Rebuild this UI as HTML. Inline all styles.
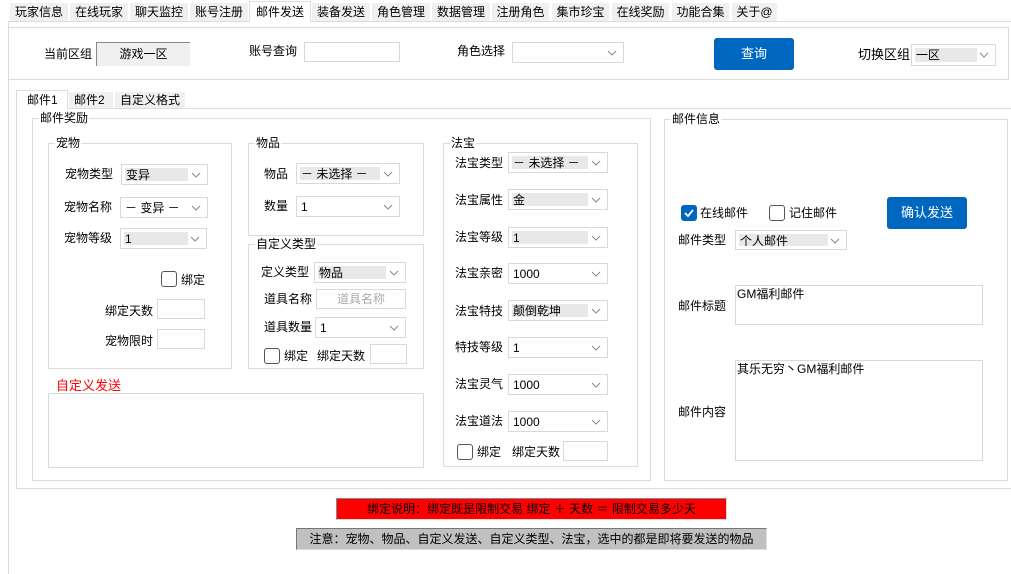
<!DOCTYPE html>
<html><head><meta charset="utf-8">
<style>
*{box-sizing:border-box;margin:0;padding:0}
body{width:1011px;height:574px;background:#fff;position:relative;overflow:hidden;font-family:"Liberation Sans","Noto Sans CJK SC",sans-serif;font-size:12px;color:#000}
.a{position:absolute}
.t{position:absolute;line-height:14px;white-space:nowrap}
.tab{position:absolute;top:3px;height:18px;background:#f0f0f0;text-align:center;line-height:18px;font-size:12px}
.bx{position:absolute;border:1px solid #dcdcdc}
.gl{position:absolute;background:#fff;padding:0 1px;line-height:14px;top:-8px;left:6px;white-space:nowrap}
.s{position:absolute;border:1px solid #d9d9d9;background:#fff;height:21px}
.s .f{position:absolute;left:3px;top:3px;bottom:3px;background:#e8e8e8}
.s .v{position:absolute;left:4px;top:3px;line-height:14px;white-space:nowrap}
.s svg{position:absolute;right:6px;top:7px}
.in{position:absolute;border:1px solid #d9d9d9;background:#fff}
.cb{position:absolute;width:16px;height:16px;border:1px solid #333;border-radius:3px;background:#fff}
</style></head><body>
<!-- top tabs -->
<div class="a" style="left:8px;top:21px;width:1003px;height:1px;background:#dcdcdc"></div>
<div class="tab" style="left:10px;width:58px">玩家信息</div>
<div class="tab" style="left:70px;width:58px">在线玩家</div>
<div class="tab" style="left:130px;width:58px">聊天监控</div>
<div class="tab" style="left:190px;width:58px">账号注册</div>
<div class="tab" style="left:249px;top:1px;height:21px;width:62px;background:#fff;border:1px solid #dcdcdc;border-bottom:none;line-height:20px">邮件发送</div>
<div class="tab" style="left:312px;width:58px">装备发送</div>
<div class="tab" style="left:372px;width:58px">角色管理</div>
<div class="tab" style="left:432px;width:58px">数据管理</div>
<div class="tab" style="left:492px;width:57px">注册角色</div>
<div class="tab" style="left:552px;width:57px">集市珍宝</div>
<div class="tab" style="left:612px;width:57px">在线奖励</div>
<div class="tab" style="left:672px;width:57px">功能合集</div>
<div class="tab" style="left:732px;width:45px">关于@</div>
<div class="a" style="left:8px;top:22px;width:1px;height:552px;background:#dcdcdc"></div>
<!-- top panel -->
<div class="bx" style="left:8px;top:27px;width:1001px;height:53px;border-left:none"></div>
<div class="t" style="left:44px;top:47px">当前区组</div>
<div class="a" style="left:96px;top:42px;width:94px;height:24px;background:#f0f0f0;border-left:1px solid #888;border-top:1px solid #888;text-align:center;line-height:22px">游戏一区</div>
<div class="t" style="left:249px;top:44px">账号查询</div>
<div class="in" style="left:304px;top:42px;width:96px;height:20px"></div>
<div class="t" style="left:457px;top:44px">角色选择</div>
<div class="s" style="left:512px;top:42px;width:112px;height:21px"><svg width="10" height="6"><path d="M1 1L5 5L9 1" fill="none" stroke="#888"/></svg></div>
<div class="a" style="left:714px;top:38px;width:80px;height:32px;background:#0067c0;border-radius:3px;color:#fff;text-align:center;line-height:32px;font-size:13px">查询</div>
<div class="t" style="left:858px;top:48px;font-size:13px">切换区组</div>
<div class="s" style="left:911px;top:44px;width:85px;height:22px"><div class="f" style="width:62px"></div><div class="v" style="left:4px;top:3px">一区</div><svg width="10" height="6"><path d="M1 1L5 5L9 1" fill="none" stroke="#888"/></svg></div>
<!-- sub tabs -->
<div class="a" style="left:16px;top:108px;width:995px;height:1px;background:#dcdcdc"></div>
<div class="a" style="left:16px;top:90px;width:52px;height:19px;background:#fff;border:1px solid #dcdcdc;border-bottom:none;line-height:18px;padding-left:10px">邮件1</div>
<div class="a" style="left:69px;top:92px;width:44px;height:16px;background:#f0f0f0;line-height:16px;padding-left:5px">邮件2</div>
<div class="a" style="left:115px;top:92px;width:70px;height:16px;background:#f0f0f0;line-height:16px;padding-left:5px">自定义格式</div>
<div class="bx" style="left:16px;top:108px;width:1000px;height:381px;border-top:none"></div>
<!-- 邮件奖励 -->
<div class="bx" style="left:32px;top:118px;width:619px;height:363px"><div class="gl">邮件奖励</div></div>
<!-- 宠物 -->
<div class="bx" style="left:48px;top:143px;width:184px;height:226px"><div class="gl">宠物</div></div>
<div class="t" style="left:65px;top:167px">宠物类型</div>
<div class="s" style="left:121px;top:164px;width:87px"><div class="f" style="width:63px"></div><div class="v">变异</div><svg width="10" height="6"><path d="M1 1L5 5L9 1" fill="none" stroke="#888"/></svg></div>
<div class="t" style="left:64px;top:200px">宠物名称</div>
<div class="s" style="left:120px;top:197px;width:88px"><div class="v">－ 变异 －</div><svg width="10" height="6"><path d="M1 1L5 5L9 1" fill="none" stroke="#888"/></svg></div>
<div class="t" style="left:64px;top:231px">宠物等级</div>
<div class="s" style="left:120px;top:228px;width:87px"><div class="f" style="width:64px"></div><div class="v">1</div><svg width="10" height="6"><path d="M1 1L5 5L9 1" fill="none" stroke="#888"/></svg></div>
<div class="cb" style="left:161px;top:271px;border-color:#555"></div>
<div class="t" style="left:181px;top:273px">绑定</div>
<div class="t" style="left:105px;top:304px">绑定天数</div>
<div class="in" style="left:157px;top:299px;width:48px;height:20px"></div>
<div class="t" style="left:105px;top:334px">宠物限时</div>
<div class="in" style="left:157px;top:329px;width:48px;height:20px"></div>
<!-- 物品 -->
<div class="bx" style="left:248px;top:143px;width:176px;height:93px"><div class="gl">物品</div></div>
<div class="t" style="left:264px;top:167px">物品</div>
<div class="s" style="left:296px;top:163px;width:104px"><div class="f" style="width:80px"></div><div class="v">－ 未选择 －</div><svg width="10" height="6"><path d="M1 1L5 5L9 1" fill="none" stroke="#888"/></svg></div>
<div class="t" style="left:264px;top:199px">数量</div>
<div class="s" style="left:296px;top:196px;width:104px"><div class="v">1</div><svg width="10" height="6"><path d="M1 1L5 5L9 1" fill="none" stroke="#888"/></svg></div>
<!-- 自定义类型 -->
<div class="bx" style="left:248px;top:244px;width:176px;height:125px"><div class="gl">自定义类型</div></div>
<div class="t" style="left:261px;top:265px">定义类型</div>
<div class="s" style="left:314px;top:262px;width:92px"><div class="f" style="width:68px"></div><div class="v">物品</div><svg width="10" height="6"><path d="M1 1L5 5L9 1" fill="none" stroke="#888"/></svg></div>
<div class="t" style="left:264px;top:292px">道具名称</div>
<div class="in" style="left:316px;top:289px;width:90px;height:20px;color:#aaa;text-align:center;line-height:18px">道具名称</div>
<div class="t" style="left:264px;top:320px">道具数量</div>
<div class="s" style="left:315px;top:317px;width:91px"><div class="v">1</div><svg width="10" height="6"><path d="M1 1L5 5L9 1" fill="none" stroke="#888"/></svg></div>
<div class="cb" style="left:264px;top:348px;border-color:#555"></div>
<div class="t" style="left:284px;top:349px">绑定</div>
<div class="t" style="left:317px;top:349px">绑定天数</div>
<div class="in" style="left:370px;top:344px;width:37px;height:20px"></div>
<!-- 自定义发送 -->
<div class="t" style="left:56px;top:379px;color:#f00;font-size:13px">自定义发送</div>
<div class="in" style="left:48px;top:393px;width:376px;height:75px"></div>
<!-- 法宝 -->
<div class="bx" style="left:443px;top:143px;width:195px;height:324px"><div class="gl">法宝</div></div>
<div class="t" style="left:455px;top:156px">法宝类型</div>
<div class="s" style="left:508px;top:152px;width:100px"><div class="f" style="width:76px"></div><div class="v">－ 未选择 －</div><svg width="10" height="6"><path d="M1 1L5 5L9 1" fill="none" stroke="#888"/></svg></div>
<div class="t" style="left:455px;top:193px">法宝属性</div>
<div class="s" style="left:508px;top:189px;width:100px"><div class="f" style="width:76px"></div><div class="v">金</div><svg width="10" height="6"><path d="M1 1L5 5L9 1" fill="none" stroke="#888"/></svg></div>
<div class="t" style="left:455px;top:230px">法宝等级</div>
<div class="s" style="left:508px;top:227px;width:100px"><div class="f" style="width:76px"></div><div class="v">1</div><svg width="10" height="6"><path d="M1 1L5 5L9 1" fill="none" stroke="#888"/></svg></div>
<div class="t" style="left:455px;top:266px">法宝亲密</div>
<div class="s" style="left:508px;top:263px;width:100px"><div class="v">1000</div><svg width="10" height="6"><path d="M1 1L5 5L9 1" fill="none" stroke="#888"/></svg></div>
<div class="t" style="left:455px;top:304px">法宝特技</div>
<div class="s" style="left:508px;top:300px;width:100px"><div class="f" style="width:76px"></div><div class="v">颠倒乾坤</div><svg width="10" height="6"><path d="M1 1L5 5L9 1" fill="none" stroke="#888"/></svg></div>
<div class="t" style="left:455px;top:340px">特技等级</div>
<div class="s" style="left:508px;top:337px;width:100px"><div class="v">1</div><svg width="10" height="6"><path d="M1 1L5 5L9 1" fill="none" stroke="#888"/></svg></div>
<div class="t" style="left:455px;top:377px">法宝灵气</div>
<div class="s" style="left:508px;top:374px;width:100px"><div class="v">1000</div><svg width="10" height="6"><path d="M1 1L5 5L9 1" fill="none" stroke="#888"/></svg></div>
<div class="t" style="left:455px;top:414px">法宝道法</div>
<div class="s" style="left:508px;top:411px;width:100px"><div class="v">1000</div><svg width="10" height="6"><path d="M1 1L5 5L9 1" fill="none" stroke="#888"/></svg></div>
<div class="cb" style="left:457px;top:444px;border-color:#555"></div>
<div class="t" style="left:477px;top:445px">绑定</div>
<div class="t" style="left:512px;top:445px">绑定天数</div>
<div class="in" style="left:563px;top:441px;width:45px;height:20px"></div>
<!-- 邮件信息 -->
<div class="bx" style="left:664px;top:119px;width:344px;height:362px"><div class="gl">邮件信息</div></div>
<div class="a" style="left:681px;top:205px;width:16px;height:16px;background:#0067c0;border-radius:3px"><svg width="16" height="16"><path d="M4 8L7 11L12 5" fill="none" stroke="#fff" stroke-width="1.8"/></svg></div>
<div class="t" style="left:700px;top:206px">在线邮件</div>
<div class="cb" style="left:769px;top:205px;border-color:#555"></div>
<div class="t" style="left:789px;top:206px">记住邮件</div>
<div class="a" style="left:887px;top:197px;width:80px;height:32px;background:#0067c0;border-radius:3px;color:#fff;text-align:center;line-height:32px;font-size:13px">确认发送</div>
<div class="t" style="left:678px;top:233px">邮件类型</div>
<div class="s" style="left:735px;top:230px;width:112px;height:20px"><div class="f" style="width:89px"></div><div class="v">个人邮件</div><svg width="10" height="6"><path d="M1 1L5 5L9 1" fill="none" stroke="#888"/></svg></div>
<div class="t" style="left:678px;top:299px">邮件标题</div>
<div class="in" style="left:735px;top:285px;width:248px;height:40px;padding:1px 1px;line-height:14px">GM福利邮件</div>
<div class="t" style="left:678px;top:405px">邮件内容</div>
<div class="in" style="left:735px;top:360px;width:248px;height:101px;padding:1px 1px;line-height:14px">其乐无穷丶GM福利邮件</div>
<!-- bottom notes -->
<div class="a" style="left:336px;top:498px;width:391px;height:22px;background:#f00;border:1px solid;border-color:#888 #ddd #ddd #888;text-align:center;line-height:20px">绑定说明：绑定既是限制交易 绑定 ＋ 天数 ＝ 限制交易多少天</div>
<div class="a" style="left:296px;top:528px;width:471px;height:22px;background:#c0c0c0;border:1px solid;border-color:#777 #ddd #ddd #777;text-align:center;line-height:20px">注意：宠物、物品、自定义发送、自定义类型、法宝，选中的都是即将要发送的物品</div>
</body></html>
